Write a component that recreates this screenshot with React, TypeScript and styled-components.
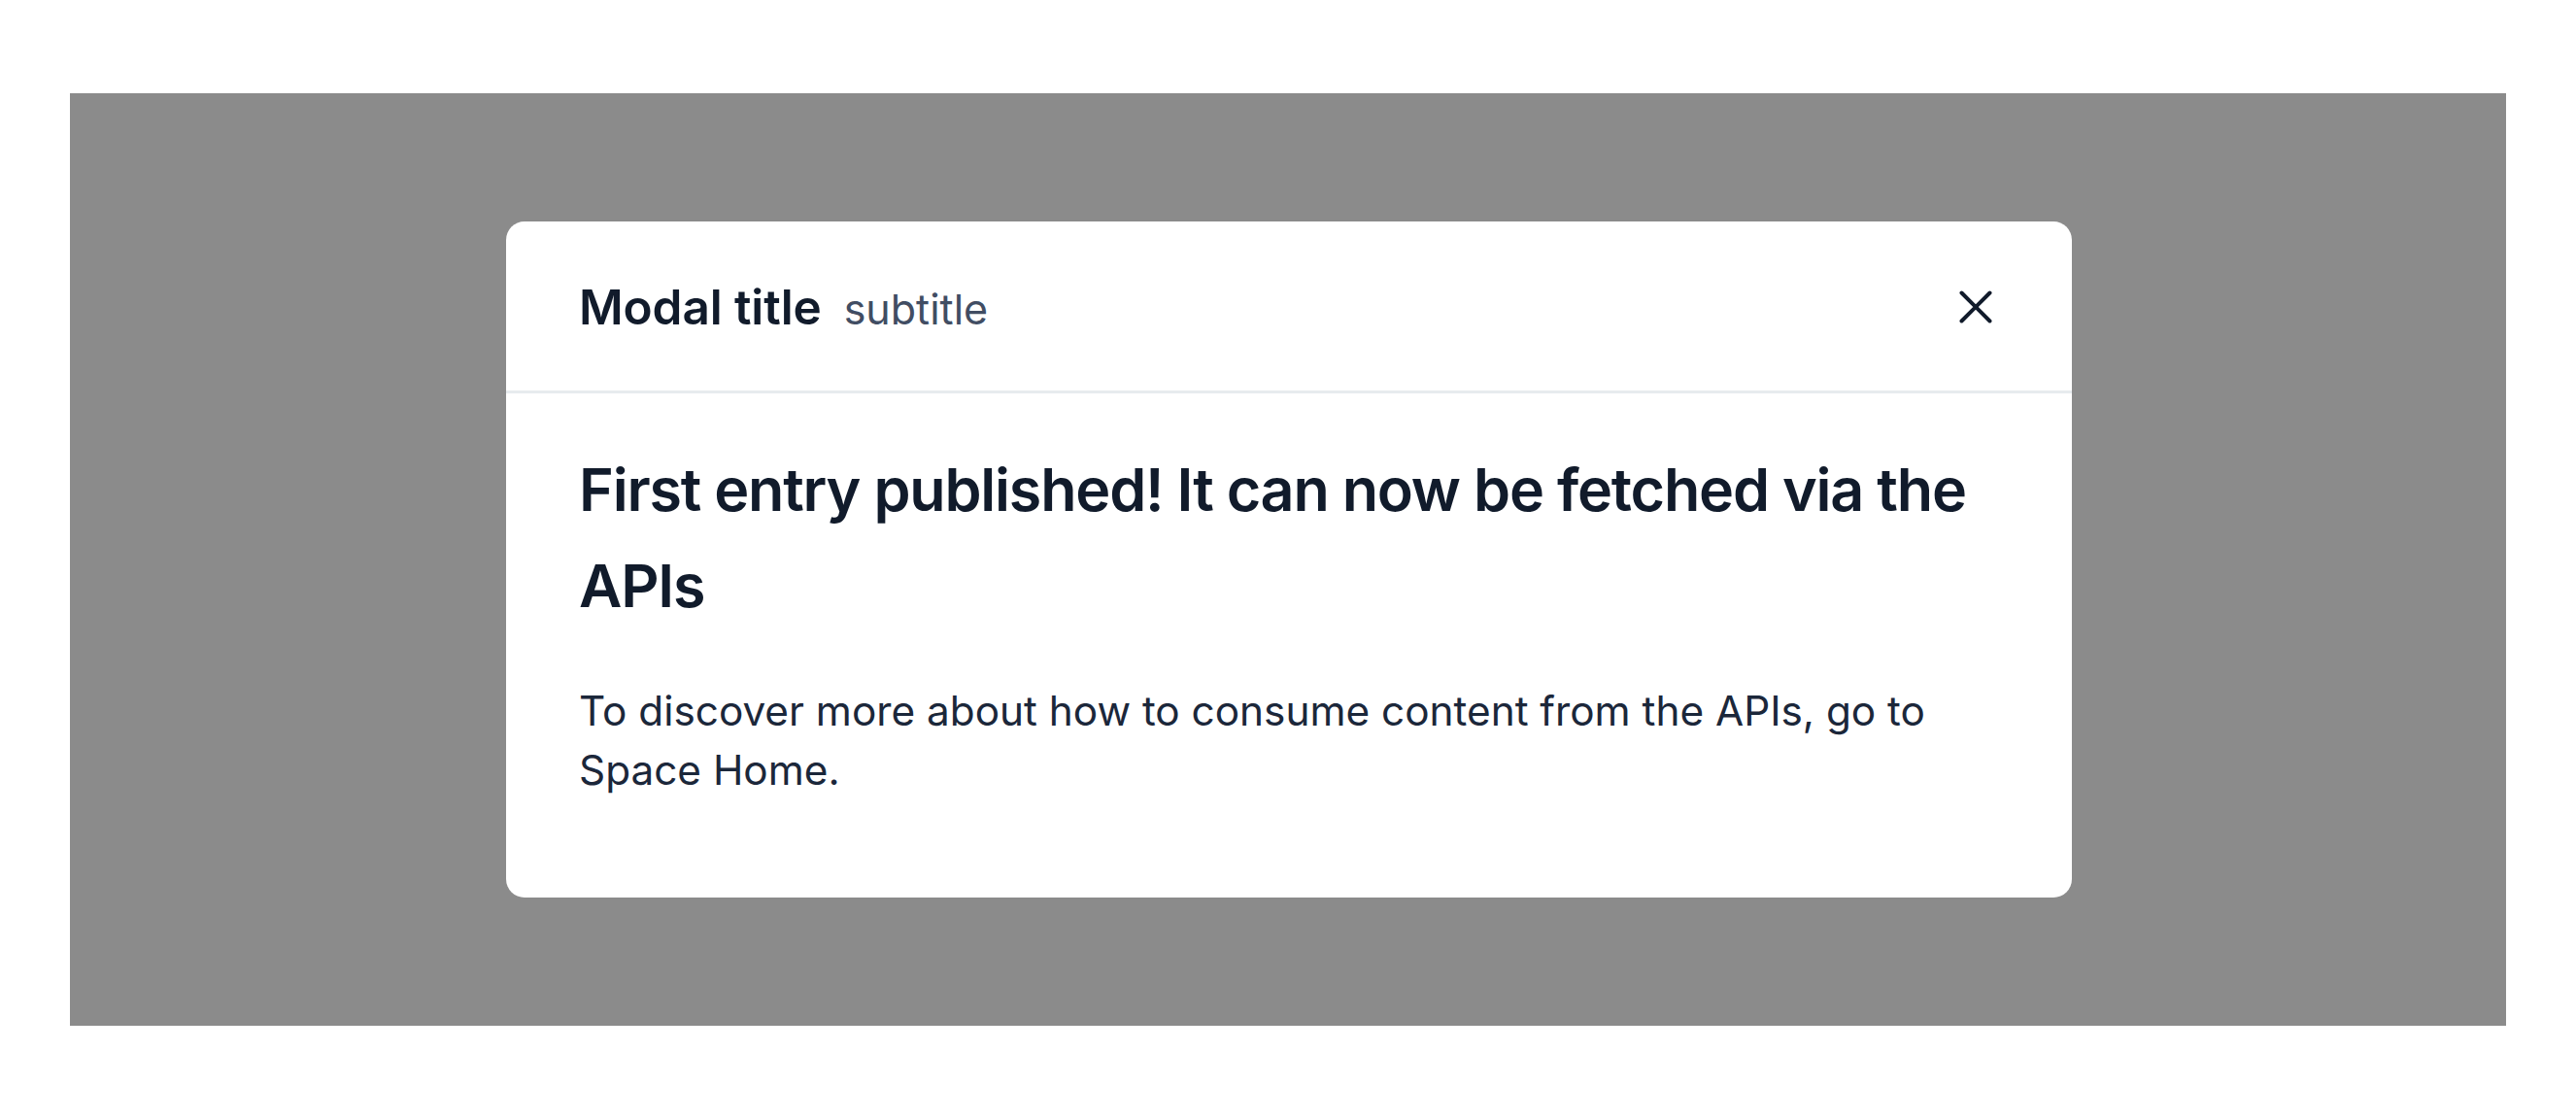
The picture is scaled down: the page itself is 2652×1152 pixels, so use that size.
import React from "react";
import styled, { createGlobalStyle } from "styled-components";

const GlobalStyle = createGlobalStyle`
  html, body {
    margin: 0;
    padding: 0;
    background: #ffffff;
  }
  body {
    font-family: Inter, "Noto Sans", "Liberation Sans", sans-serif;
    -webkit-font-smoothing: antialiased;
  }
  * { box-sizing: border-box; }
`;

const Page = styled.div`
  padding: 96px 72px;
`;

const Backdrop = styled.div`
  height: 960px;
  background: #8b8b8b;
  display: flex;
  align-items: center;
  justify-content: center;
`;

const Modal = styled.div`
  width: 1612px;
  margin-left: 2px;
  background: #ffffff;
  border-radius: 19px;
  display: flex;
  flex-direction: column;
  overflow: hidden;
`;

const Header = styled.div`
  height: 177px;
  display: flex;
  align-items: center;
  justify-content: space-between;
  padding: 2px 82px 0 75px;
  border-bottom: 3px solid #e7ebee;
`;

const TitleGroup = styled.div`
  display: flex;
  align-items: baseline;
  gap: 23px;
`;

const Title = styled.h1`
  margin: 0;
  font-size: 49.5px;
  line-height: 74px;
  font-weight: 600;
  color: #111b2b;
  letter-spacing: -0.1px;
`;

const Subtitle = styled.span`
  font-size: 43px;
  line-height: 62px;
  font-weight: 400;
  color: #414d63;
`;

const CloseButton = styled.button`
  width: 34px;
  height: 34px;
  padding: 0;
  border: none;
  background: transparent;
  display: flex;
  align-items: center;
  justify-content: center;
  cursor: pointer;
  color: #111b2b;
`;

const Body = styled.div`
  padding: 50px 75px 101px 75px;
`;

const Heading = styled.h2`
  margin: 0 0 48px 0;
  font-size: 61px;
  line-height: 99px;
  font-weight: 600;
  color: #111b2b;
  letter-spacing: -1.2px;
`;

const Paragraph = styled.p`
  margin: 0;
  font-size: 42.3px;
  line-height: 61px;
  font-weight: 400;
  color: #1b273a;
`;

const CloseIcon = () => (
  <svg width="34" height="34" viewBox="0 0 34 34" fill="none">
    <path
      d="M2.5 2.5 L31.5 31.5 M31.5 2.5 L2.5 31.5"
      stroke="currentColor"
      strokeWidth="4"
      strokeLinecap="round"
    />
  </svg>
);

export default function App() {
  return (
    <>
      <GlobalStyle />
      <Page>
        <Backdrop>
          <Modal>
            <Header>
              <TitleGroup>
                <Title>Modal title</Title>
                <Subtitle>subtitle</Subtitle>
              </TitleGroup>
              <CloseButton aria-label="Close">
                <CloseIcon />
              </CloseButton>
            </Header>
            <Body>
              <Heading>
                First entry published! It can now be fetched via the APIs
              </Heading>
              <Paragraph>
                To discover more about how to consume content from the APIs, go
                to Space Home.
              </Paragraph>
            </Body>
          </Modal>
        </Backdrop>
      </Page>
    </>
  );
}
